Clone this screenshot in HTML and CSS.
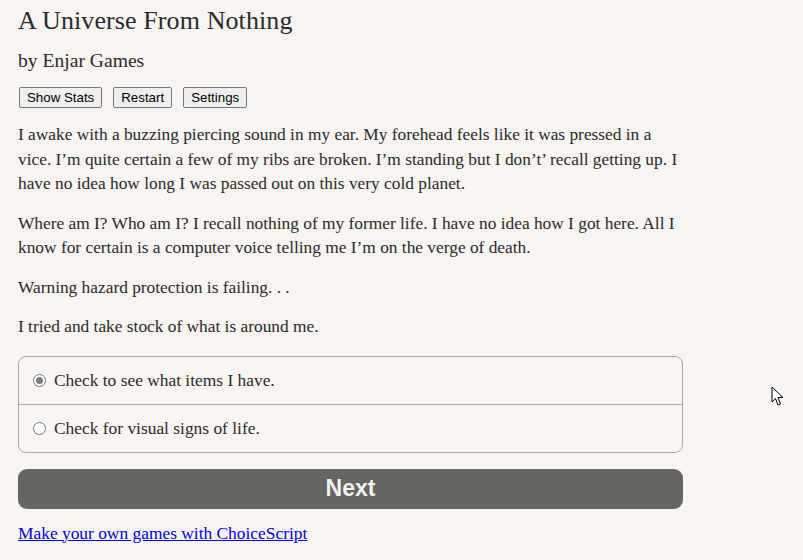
FILE: index.html
```html
<!DOCTYPE html>
<html lang="en">
<head>
<meta charset="utf-8">
<title>A Universe From Nothing</title>
<link rel="stylesheet" href="styles.css">
</head>
<body>
<div class="main">
  <h1 class="title">A Universe From Nothing</h1>
  <h2 class="author">by Enjar Games</h2>
  <div class="toolbar">
    <button class="tool-btn">Show Stats</button>
    <button class="tool-btn">Restart</button>
    <button class="tool-btn">Settings</button>
  </div>
  <div class="story">
    <p>I awake with a buzzing piercing sound in my ear. My forehead feels like it was pressed in a vice. I’m quite certain a few of my ribs are broken. I’m standing but I don’t’ recall getting up. I have no idea how long I was passed out on this very cold planet.</p>
    <p>Where am I? Who am I? I recall nothing of my former life. I have no idea how I got here. All I know for certain is a computer voice telling me I’m on the verge of death.</p>
    <p>Warning hazard protection is failing. . .</p>
    <p>I tried and take stock of what is around me.</p>
  </div>
  <div class="choices">
    <label class="choice"><span class="radio checked"></span>Check to see what items I have.</label>
    <label class="choice"><span class="radio"></span>Check for visual signs of life.</label>
  </div>
  <button class="next">Next</button>
  <p class="footer"><a href="#">Make your own games with ChoiceScript</a></p>
</div>
<svg class="cursor" width="14" height="22" viewBox="0 0 14 22"><path d="M1 1 L1 16 L4.5 12.5 L7 19 L9.5 18 L7 11.5 L12 11.5 Z" fill="#fff" stroke="#000" stroke-width="1" stroke-linejoin="round"/></svg>
</body>
</html>
```

FILE: styles.css
```css
html, body {
  margin: 0;
  padding: 0;
  background: #f7f4f1;
}
body {
  font-family: "Liberation Serif", "Times New Roman", serif;
  color: #2b2b2b;
  position: relative;
  height: 560px;
  overflow: hidden;
}
.main {
  width: 665px;
  padding: 6px 0 0 18px;
}
.title {
  font-size: 26px;
  font-weight: normal;
  line-height: 30px;
  margin: 0;
  letter-spacing: 0.1px;
}
.author {
  font-size: 19.6px;
  font-weight: normal;
  line-height: 24px;
  margin: 13px 0 0;
}
.toolbar {
  display: flex;
  gap: 11px;
  margin-top: 14px;
  padding-left: 1px;
}
.tool-btn {
  font-family: "Liberation Sans", Arial, sans-serif;
  font-size: 13.3px;
  color: #000;
  background: #efefef;
  border: 1px solid #767676;
  border-radius: 2px;
  height: 21px;
  padding: 0 7px;
  line-height: 19px;
}
.story {
  margin-top: 15px;
  font-size: 17.35px;
  line-height: 24.5px;
}
.story p {
  margin: 0 0 15px;
}
.story p:last-child {
  margin-bottom: 0;
}
.choices {
  margin-top: 16px;
  border: 1px solid #a9a7a4;
  border-radius: 8px;
  font-size: 17.4px;
}
.choice {
  display: flex;
  align-items: center;
  height: 47px;
  padding-left: 14px;
}
.choice + .choice {
  border-top: 1px solid #a9a7a4;
}
.radio {
  width: 11px;
  height: 11px;
  border: 1px solid #767676;
  border-radius: 50%;
  background: #fff;
  margin-right: 8px;
  position: relative;
  flex: none;
}
.radio.checked::after {
  content: "";
  position: absolute;
  left: 2px;
  top: 2px;
  width: 7px;
  height: 7px;
  border-radius: 50%;
  background: #7b7b7b;
}
.next {
  display: block;
  width: 100%;
  margin-top: 16px;
  height: 40px;
  border: none;
  border-radius: 9px;
  background: #656562;
  color: #f4f2ef;
  font-family: "Liberation Sans", Arial, sans-serif;
  font-weight: bold;
  font-size: 23px;
}
.footer {
  margin: 12px 0 0;
  font-size: 17.4px;
  line-height: 24px;
}
.footer a {
  color: #0000ee;
}
.cursor {
  position: absolute;
  left: 771px;
  top: 386px;
}
```
